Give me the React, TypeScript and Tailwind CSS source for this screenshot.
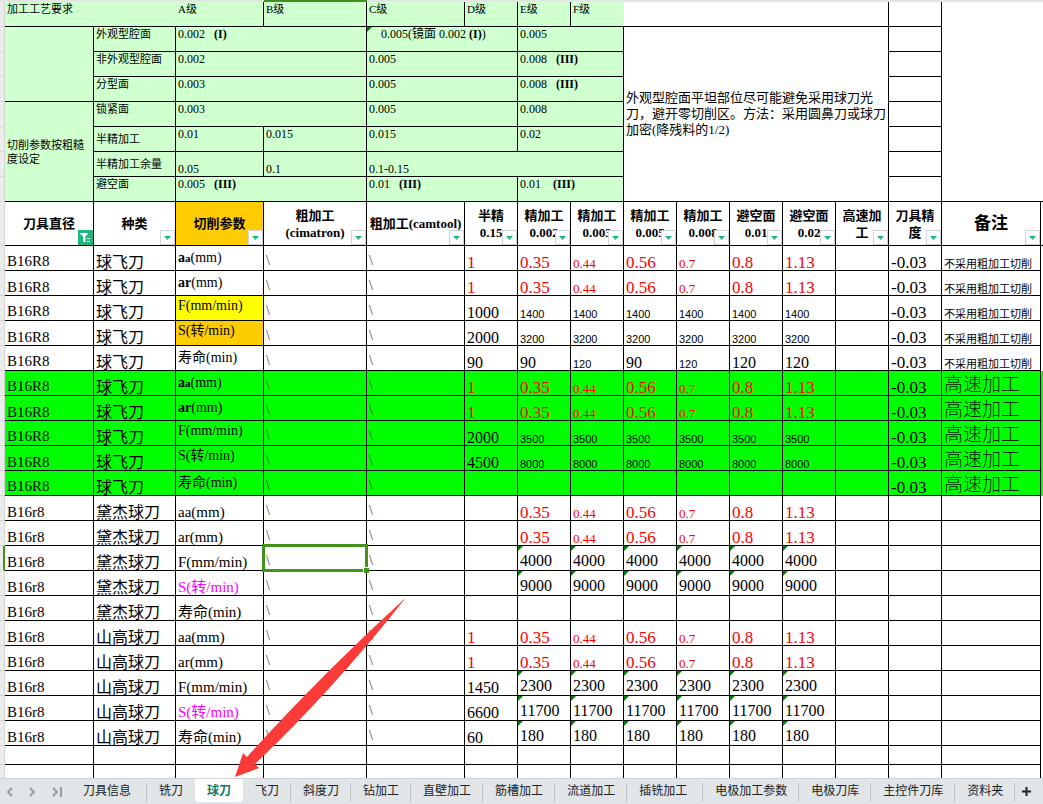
import clsx from 'clsx';
import type { ReactNode } from 'react';

type Style = 'song' | 'decimal' | 'smallInt' | 'times' | 'red' | 'redSmall';

interface Value {
  text: string;
  style: Style;
  flag?: boolean;
}

interface DataRow {
  diameter: string;
  diameterTimes?: boolean;
  kind: string;
  param: ReactNode;
  paramClass: string;
  semi?: Value;
  values: Value[];
  precision?: string;
  note?: string;
  fast?: boolean;
  selected?: boolean;
}

const SERIF = "font-['Liberation_Serif','Noto_Sans_CJK_SC',serif]";
const SANS = "font-['Liberation_Sans','Noto_Sans_CJK_SC',sans-serif]";

const VALUE_STYLES: Record<Style, string> = {
  song: `${SERIF} text-[16px] leading-[14px] align-bottom`,
  decimal: `${SERIF} text-[17px] leading-[14px] align-bottom`,
  smallInt: `${SANS} text-[11px] leading-[12px] align-bottom`,
  times: `${SERIF} text-[16px] leading-[16px] align-middle pt-[5px]`,
  red: `${SERIF} text-[17px] leading-[14px] align-bottom text-[#ff0000]`,
  redSmall: `${SERIF} text-[13px] leading-[12px] align-bottom text-[#ff0000]`,
};

const cell = 'border-r border-b border-black p-0 pl-[2px] whitespace-nowrap overflow-hidden';
// Fine two-colour hatch of the grade table, fixed so that it runs on from cell to cell
const mint = 'bg-[repeating-conic-gradient(#ccffff_0_25%,#ccffcc_0_50%)] bg-[length:2px_2px] bg-fixed';

const song = (text: string): Value => ({ text, style: 'song' });
const red = (text: string): Value => ({ text, style: 'red' });
const repeat = (text: string, style: Style, flag = false): Value[] =>
  Array.from({ length: 6 }, () => ({ text, style, flag }));

const DEPTHS: Value[] = [
  red('0.35'),
  { text: '0.44', style: 'redSmall' },
  red('0.56'),
  { text: '0.7', style: 'redSmall' },
  red('0.8'),
  red('1.13'),
];

const LIFE: Value[] = [
  song('90'),
  { text: '120', style: 'smallInt' },
  song('90'),
  { text: '120', style: 'smallInt' },
  song('120'),
  song('120'),
];

const paramTimes = `${SERIF} text-[14px] leading-[18px]`;
const paramMid = `${paramTimes} align-middle`;
const paramTop = `${paramTimes} align-top pt-px`;
const paramSong = `${SERIF} text-[15px] leading-[16px] align-bottom`;

const AA = (
  <>
    <b>a</b>
    <b className="text-[11px]">a</b>(mm)
  </>
);
const AR = (
  <>
    <b>ar</b>(mm)
  </>
);

const flying = { diameter: 'B16R8', kind: '球飞刀', precision: '-0.03' };
const slow = { ...flying, note: '不采用粗加工切削' };
const fast = { ...flying, note: '高速加工', fast: true };
const daijie = { diameter: 'B16r8', kind: '黛杰球刀', paramClass: paramSong };
const seco = { diameter: 'B16r8', kind: '山高球刀', paramClass: paramSong };
const pink = `${paramSong} text-[#ff00ff]`;

const ROWS: DataRow[] = [
  { ...slow, diameterTimes: true, param: AA, paramClass: paramMid, semi: red('1'), values: DEPTHS },
  { ...slow, param: AR, paramClass: paramMid, semi: red('1'), values: DEPTHS },
  { ...slow, diameterTimes: true, param: 'F(mm/min)', paramClass: `${paramTop} bg-[#ffff00]`, semi: song('1000'), values: repeat('1400', 'smallInt') },
  { ...slow, param: 'S(转/min)', paramClass: `${paramTop} bg-[#ffcc00]`, semi: song('2000'), values: repeat('3200', 'smallInt') },
  { ...slow, diameterTimes: true, param: '寿命(min)', paramClass: paramMid, semi: song('90'), values: LIFE },
  { ...fast, diameterTimes: true, param: AA, paramClass: paramMid, semi: red('1'), values: DEPTHS },
  { ...fast, param: AR, paramClass: paramMid, semi: red('1'), values: DEPTHS },
  { ...fast, diameterTimes: true, param: 'F(mm/min)', paramClass: paramTop, semi: song('2000'), values: repeat('3500', 'smallInt') },
  { ...fast, param: 'S(转/min)', paramClass: paramTop, semi: song('4500'), values: repeat('8000', 'smallInt') },
  { ...fast, diameterTimes: true, param: '寿命(min)', paramClass: paramMid, values: [] },
  { ...daijie, param: 'aa(mm)', values: DEPTHS },
  { ...daijie, param: 'ar(mm)', values: DEPTHS },
  { ...daijie, param: 'F(mm/min)', values: repeat('4000', 'times', true), selected: true },
  { ...daijie, param: 'S(转/min)', paramClass: pink, values: repeat('9000', 'times', true) },
  { ...daijie, param: '寿命(min)', values: [] },
  { ...seco, param: 'aa(mm)', semi: red('1'), values: DEPTHS },
  { ...seco, param: 'ar(mm)', semi: red('1'), values: DEPTHS },
  { ...seco, param: 'F(mm/min)', semi: song('1450'), values: repeat('2300', 'times', true) },
  { ...seco, param: 'S(转/min)', paramClass: pink, semi: song('6600'), values: repeat('11700', 'times', true) },
  { ...seco, param: '寿命(min)', semi: song('60'), values: repeat('180', 'times', true) },
];

const HEADERS: { lines: string[]; className?: string; active?: boolean }[] = [
  { lines: ['刀具直径'], active: true },
  { lines: ['种类'] },
  { lines: ['切削参数'], className: 'bg-[#ffcc00] text-[13px]' },
  { lines: ['粗加工', '(cimatron)'] },
  { lines: ['粗加工(camtool)'] },
  { lines: ['半精', '0.15'] },
  { lines: ['精加工', '0.002'] },
  { lines: ['精加工', '0.003'] },
  { lines: ['精加工', '0.005'] },
  { lines: ['精加工', '0.008'] },
  { lines: ['避空面', '0.01'] },
  { lines: ['避空面', '0.02'] },
  { lines: ['高速加', '工'] },
  { lines: ['刀具精', '度'] },
  { lines: ['备注'], className: 'bg-white text-[17px]' },
];

const TABS = [
  '刀具信息', '铣刀', '球刀', '飞刀', '斜度刀', '钻加工', '直壁加工', '筋槽加工',
  '流道加工', '插铣加工', '电极加工参数', '电极刀库', '主控件刀库', '资料夹',
];
const ACTIVE_TAB = 2;
const WIDE_TABS = ['刀具信息', '插铣加工'];

function Flag() {
  return (
    <svg className="absolute top-0 left-0" width="5" height="5" viewBox="0 0 5 5" aria-hidden="true">
      <path d="M0 0H5L0 5Z" fill="#008000" />
    </svg>
  );
}

function FilterButton({ label, active }: { label: string; active?: boolean }) {
  return (
    <button
      type="button"
      aria-label={label}
      className={clsx(
        'absolute right-0 bottom-0 flex size-[15px] items-center justify-center',
        active ? 'bg-[#21b87f]' : 'border border-[#d3d3de] bg-white'
      )}
    >
      {active ? (
        <svg width="11" height="11" viewBox="0 0 11 11" aria-hidden="true">
          <path d="M0 1H8V2L5.500 4V10H3V4L0 2Z" fill="#fff" />
          <path d="M7 6.500H10M7 9.500H10" stroke="#fff" />
        </svg>
      ) : (
        <svg width="7" height="4" viewBox="0 0 7 4" aria-hidden="true">
          <path d="M0 0H7L3.500 4Z" fill="#21b87f" />
        </svg>
      )}
    </button>
  );
}

// Narrow strip of the row numbers that is still visible on the left
function Gutter({ selected }: { selected?: boolean }) {
  return (
    <td
      className={clsx(
        'border-b border-b-[#d4d4d4] bg-[#ececec] p-0',
        selected ? 'border-r-2 border-r-[#43921e]' : 'border-r border-r-[#d4d4d4]'
      )}
    />
  );
}

interface GradeCellProps {
  children?: ReactNode;
  span?: number;
  bottom?: boolean;
  className?: string;
}

function GradeCell({ children, span, bottom, className }: GradeCellProps) {
  return (
    <td
      colSpan={span}
      className={clsx(cell, mint, 'relative whitespace-pre', bottom ? 'align-bottom leading-[14px]' : 'align-top', className)}
    >
      {children}
    </td>
  );
}

function LabelCell({ children, middle }: { children: ReactNode; middle?: boolean }) {
  return <td className={clsx(cell, mint, 'text-[11px]', middle ? 'align-middle' : 'align-top')}>{children}</td>;
}

function NumberRow({ label, a, c, e }: { label: string; a: ReactNode; c: ReactNode; e: ReactNode }) {
  return (
    <>
      <LabelCell>{label}</LabelCell>
      <GradeCell span={2}>{a}</GradeCell>
      <GradeCell span={2}>{c}</GradeCell>
      <GradeCell span={2}>{e}</GradeCell>
    </>
  );
}

const narrow = <td className={cell} />;

function GradeRows() {
  return (
    <tbody className={`${SERIF} text-[12px] leading-[15px]`}>
      <tr className="h-[25px]">
        <Gutter />
        <td colSpan={2} className={clsx(mint, 'border-b border-black p-0 pl-[2px] align-top text-[11px]')}>加工工艺要求</td>
        <GradeCell className="text-[11px]">A级</GradeCell>
        <GradeCell className="text-[11px]">B级</GradeCell>
        <GradeCell className="text-[11px]">C级</GradeCell>
        <GradeCell className="text-[11px]">D级</GradeCell>
        <GradeCell className="text-[11px]">E级</GradeCell>
        <td className={clsx(mint, 'border-b border-black p-0 pl-[2px] align-top text-[11px]')}>F级</td>
        <td colSpan={5} className={cell} />
        {narrow}
        <td rowSpan={8} className="border-b border-black" />
        <td />
      </tr>
      <tr className="h-[25px]">
        <Gutter />
        <td rowSpan={3} className={clsx(cell, mint)} />
        <NumberRow
          label="外观型腔面"
          a={<>0.002{'   '}<b>(I)</b></>}
          c={<><Flag />{'    '}0.005(镜面 0.002 <b>(I)</b>)</>}
          e="0.005"
        />
        <td
          colSpan={5}
          rowSpan={7}
          className={clsx(SERIF, 'border-r border-b border-black p-0 pl-[2px] align-middle text-[13px] leading-[16px]')}
        >
          外观型腔面平坦部位尽可能避免采用球刀光刀，避开零切削区。方法：采用圆鼻刀或球刀加密(降残料的1/2)
        </td>
        {narrow}
        <td />
      </tr>
      <tr className="h-[25px]">
        <Gutter />
        <NumberRow label="非外观型腔面" a="0.002" c="0.005" e={<>0.008{'   '}<b>(III)</b></>} />
        {narrow}
        <td />
      </tr>
      <tr className="h-[25px]">
        <Gutter />
        <NumberRow label="分型面" a="0.003" c="0.005" e={<>0.008{'   '}<b>(III)</b></>} />
        {narrow}
        <td />
      </tr>
      <tr className="h-[25px]">
        <Gutter />
        <td
          rowSpan={4}
          className={clsx(mint, 'border-r border-b border-black p-0 pr-1 pl-[2px] align-middle text-[11px] leading-[14px]')}
        >
          切削参数按粗糙度设定
        </td>
        <NumberRow label="锁紧面" a="0.003" c="0.005" e="0.008" />
        {narrow}
        <td />
      </tr>
      <tr className="h-[25px]">
        <Gutter />
        <LabelCell middle>半精加工</LabelCell>
        <GradeCell>0.01</GradeCell>
        <GradeCell>0.015</GradeCell>
        <GradeCell span={2}>0.015</GradeCell>
        <GradeCell span={2}>0.02</GradeCell>
        {narrow}
        <td />
      </tr>
      <tr className="h-[25px]">
        <Gutter />
        <LabelCell middle>半精加工余量</LabelCell>
        <GradeCell bottom>0.05</GradeCell>
        <GradeCell bottom>0.1</GradeCell>
        <GradeCell span={4} bottom>0.1-0.15</GradeCell>
        {narrow}
        <td />
      </tr>
      <tr className="h-[25px]">
        <Gutter />
        <NumberRow
          label="避空面"
          a={<>0.005{'   '}<b>(III)</b></>}
          c={<>0.01{'   '}<b>(III)</b></>}
          e={<>0.01{'    '}<b>(III)</b></>}
        />
        {narrow}
        <td className="border-b border-black" />
      </tr>
    </tbody>
  );
}

function HeaderRow() {
  return (
    <tbody className={SERIF}>
      <tr className="h-[44px]">
        <Gutter />
        {HEADERS.map((header, i) => (
          <th
            key={i}
            scope="col"
            className={clsx(
              'relative border-r border-b border-black p-0 text-center align-middle leading-[17px] font-bold whitespace-nowrap',
              header.className ?? 'bg-white text-[13px]'
            )}
          >
            {header.lines.map(line => (
              <div key={line}>{line}</div>
            ))}
            <FilterButton label={`筛选 ${header.lines.join('')}`} active={header.active} />
          </th>
        ))}
        <td className="border-b border-black" />
      </tr>
    </tbody>
  );
}

function Row({ row }: { row: DataRow }) {
  const slash = `${cell} ${SERIF} text-[14px] leading-[16px] align-middle pt-[5px] text-[#444]`;

  return (
    <tr className={clsx('h-[25px]', row.fast && 'bg-[#00ff00]')}>
      <Gutter selected={row.selected} />
      <td
        className={clsx(
          cell,
          SERIF,
          'text-[15px] leading-[16px]',
          row.diameterTimes ? 'pt-[5px] align-middle' : 'align-bottom'
        )}
      >
        {row.diameter}
      </td>
      <td className={`${cell} ${SERIF} align-bottom text-[16px] leading-[14px]`}>{row.kind}</td>
      <td className={clsx(cell, row.paramClass)}>{row.param}</td>
      <td className={clsx(slash, row.selected && 'relative overflow-visible')}>
        \
        {row.selected && (
          <div className="absolute -inset-[2px] border-[3px] border-[#43921e]">
            <span className="absolute -right-[4px] -bottom-[4px] size-[6px] border-t border-l border-white bg-[#43921e]" />
          </div>
        )}
      </td>
      <td className={slash}>\</td>
      <td className={clsx(cell, row.semi && VALUE_STYLES[row.semi.style])}>{row.semi?.text}</td>
      {Array.from({ length: 6 }, (_, i) => {
        const value = row.values[i];
        return (
          <td key={i} className={clsx(cell, 'relative', value && VALUE_STYLES[value.style])}>
            {value?.flag && <Flag />}
            {value?.text}
          </td>
        );
      })}
      <td className={cell} />
      <td className={clsx(cell, VALUE_STYLES.decimal)}>{row.precision}</td>
      <td
        className={clsx(
          cell,
          SERIF,
          row.fast
            ? 'pt-[4px] align-middle text-[19px] leading-[20px] font-light text-[#002800]'
            : 'align-bottom text-[11px] leading-[12px]'
        )}
      >
        {row.note}
      </td>
      <td />
    </tr>
  );
}

function EmptyRow() {
  return (
    <tr className="h-[19px]">
      <Gutter />
      {HEADERS.map((_, i) => (
        <td key={i} className={cell} />
      ))}
      <td />
    </tr>
  );
}

function Arrow() {
  return (
    <svg
      className="pointer-events-none absolute top-[596px] left-[234px]"
      width="174"
      height="184"
      viewBox="234 596 174 184"
      aria-hidden="true"
    >
      <path d="M235 777L243 753L247 757Q318 678 406 597.500Q333 690 255 764L259 768Z" fill="#fb3b38" />
    </svg>
  );
}

function TabBar() {
  return (
    <nav className="flex h-[26px] shrink-0 items-stretch overflow-hidden border-t border-[#d0d3d6] bg-[#e1e5e8] font-['Noto_Sans_CJK_SC',sans-serif] text-[12px] leading-[20px] text-[#222]">
      <div className="flex w-[71px] shrink-0 items-center gap-[16px] pl-[6px] text-[#9a9da0]">
        <button type="button" aria-label="上一个">
          <svg width="7" height="10" viewBox="0 0 7 10" fill="none" stroke="currentColor" strokeWidth="2">
            <path d="M6 1L2 5L6 9" />
          </svg>
        </button>
        <button type="button" aria-label="下一个">
          <svg width="7" height="10" viewBox="0 0 7 10" fill="none" stroke="currentColor" strokeWidth="2">
            <path d="M1 1L5 5L1 9" />
          </svg>
        </button>
        <button type="button" aria-label="最后一个">
          <svg width="10" height="10" viewBox="0 0 10 10" fill="none" stroke="currentColor" strokeWidth="2">
            <path d="M1 1L5 5L1 9M9 0V10" />
          </svg>
        </button>
      </div>
      {TABS.map((tab, i) => (
        <button
          key={tab}
          type="button"
          className={clsx(
            'relative shrink-0 pl-[12px] whitespace-nowrap',
            WIDE_TABS.includes(tab) ? 'pr-4' : 'pr-[12px]',
            i === ACTIVE_TAB ? '-mt-px mb-[2px] rounded-b-[4px] bg-white font-bold text-[#0b7d68]' : 'pb-1'
          )}
        >
          {tab}
          {i !== ACTIVE_TAB && i !== ACTIVE_TAB - 1 && (
            <span className="absolute top-[4px] right-0 h-[18px] w-px bg-[#bfc3c6]" />
          )}
        </button>
      ))}
      <button type="button" aria-label="新建工作表" className="shrink-0 pl-[6px]">
        <svg width="11" height="11" viewBox="0 0 11 11" stroke="#222" strokeWidth="2">
          <path d="M5.500 1V10M1 5.500H10" />
        </svg>
      </button>
    </nav>
  );
}

export default function App() {
  return (
    <div className="flex h-screen flex-col overflow-hidden bg-white text-black">
      <main className="relative min-h-0 flex-1 overflow-hidden">
        <table className="w-full min-w-[1000px] table-fixed border-separate border-spacing-0">
          <colgroup>
            <col className="w-[5px]" />
            <col className="w-[89px]" />
            <col className="w-[82px]" />
            <col className="w-[88px]" />
            <col className="w-[103px]" />
            <col className="w-[98px]" />
            <col span={9} className="w-[53px]" />
            <col />
            <col className="w-[2px]" />
          </colgroup>
          <thead>
            <tr className="h-[2px] bg-[#e4e4e4]">
              <td colSpan={4} className="p-0" />
              <td className="bg-[#43921e] p-0" />
              <td colSpan={12} className="p-0" />
            </tr>
          </thead>
          <GradeRows />
          <HeaderRow />
          <tbody>
            {ROWS.map((row, i) => (
              <Row key={i} row={row} />
            ))}
            <EmptyRow />
            <EmptyRow />
          </tbody>
        </table>
        <Arrow />
      </main>
      <TabBar />
    </div>
  );
}
